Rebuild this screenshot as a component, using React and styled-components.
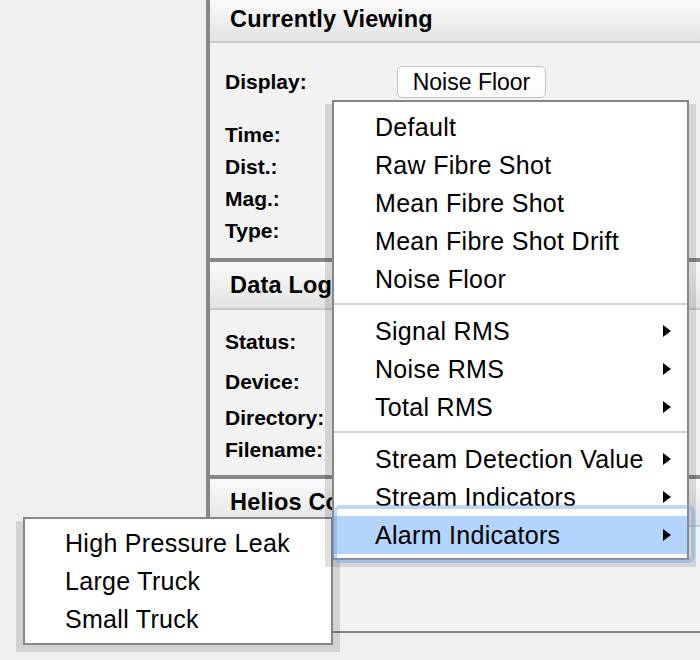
import styled, { createGlobalStyle } from 'styled-components'

const GlobalStyle = createGlobalStyle`
  body {
    margin: 0;
    background: #efefef;
    font-family: "Liberation Sans", Arial, Helvetica, sans-serif;
    color: #000;
  }
`

const Page = styled.div`
  position: relative;
  display: grid;
  grid-template-columns: 206px 1fr;
  width: 700px;
  height: 660px;
  overflow: hidden;
`

const Sidebar = styled.div`
  background: #efefef;
`

const Panel = styled.div`
  align-self: start;
  border-left: 4px solid #878787;
  background: #f2f2f2;
`

const Section = styled.section`
  border-bottom: ${(p) => (p.$last ? 2 : 4)}px solid #878787;
`

const SectionHeader = styled.h2`
  margin: 0;
  height: ${(p) => p.$height}px;
  display: flex;
  align-items: center;
  padding: ${(p) => (p.$cropped ? '0 0 2px 20px' : '0 0 0 20px')};
  box-sizing: border-box;
  background: linear-gradient(#fafafa, #e3e3e3);
  border-bottom: 2px solid #c9c9c9;
  font-size: 23.5px;
  font-weight: bold;
  letter-spacing: 0.2px;
  white-space: nowrap;
  overflow: hidden;
`

const SectionBody = styled.div`
  height: ${(p) => p.$height}px;
  padding: ${(p) => p.$pad}px 0 0 15px;
  box-sizing: border-box;
`

const Row = styled.div`
  display: grid;
  grid-template-columns: 172px auto;
  align-items: center;
  height: ${(p) => p.$height}px;
  margin-bottom: ${(p) => p.$after || 0}px;
`

const Label = styled.span`
  font-size: 21px;
  font-weight: bold;
`

const SelectButton = styled.button`
  justify-self: start;
  width: 149px;
  height: 32px;
  padding: 0;
  border: 1px solid #c4c4c4;
  border-radius: 5px;
  background: linear-gradient(#ffffff, #fbfbfb);
  font-family: inherit;
  font-size: 23px;
  color: #000;
`

const MenuLayer = styled.div`
  position: absolute;
  left: ${(p) => p.$x}px;
  top: ${(p) => p.$y}px;
  width: ${(p) => p.$w}px;
  z-index: ${(p) => p.$z};
`

const MenuShadow = styled.div`
  position: absolute;
  top: 4px;
  left: -7px;
  right: -7px;
  bottom: -7px;
  background: rgba(0, 0, 0, 0.12);
`

const MenuBox = styled.ul`
  position: relative;
  list-style: none;
  margin: 0;
  padding: ${(p) => p.$pad};
  background: #fff;
  border: 2px solid #878787;
`

const MenuItem = styled.li`
  position: relative;
  display: flex;
  align-items: center;
  justify-content: space-between;
  height: 38px;
  padding: 0 16px 0 ${(p) => p.$indent}px;
  font-size: 25px;
  letter-spacing: 0.3px;
  white-space: nowrap;
  background: ${(p) => (p.$active ? '#b3d4fc' : 'transparent')};

  ${(p) =>
    p.$active &&
    `
    &::after {
      content: '';
      position: absolute;
      top: -11px;
      bottom: -9px;
      left: -1px;
      right: -8px;
      border: 4px solid rgba(110, 165, 240, 0.45);
      border-radius: 7px;
      pointer-events: none;
    }
  `}
`

const Arrow = styled.span`
  flex: none;
  width: 0;
  height: 0;
  border-left: 8px solid #000;
  border-top: 6px solid transparent;
  border-bottom: 6px solid transparent;
`

const Separator = styled.li`
  height: 2px;
  margin: 5px 0 7px;
  background: #d2d2d2;
`

const groups = [
  [
    { label: 'Default' },
    { label: 'Raw Fibre Shot' },
    { label: 'Mean Fibre Shot' },
    { label: 'Mean Fibre Shot Drift' },
    { label: 'Noise Floor' },
  ],
  [
    { label: 'Signal RMS', sub: true },
    { label: 'Noise RMS', sub: true },
    { label: 'Total RMS', sub: true },
  ],
  [
    { label: 'Stream Detection Value', sub: true },
    { label: 'Stream Indicators', sub: true },
    { label: 'Alarm Indicators', sub: true, active: true },
  ],
]

const alarms = ['High Pressure Leak', 'Large Truck', 'Small Truck']

const App = () => {
  return (
    <>
      <GlobalStyle />
      <Page>
        <Sidebar />
        <Panel>
          <Section>
            <SectionHeader $height={43} $cropped>
              Currently Viewing
            </SectionHeader>
            <SectionBody $height={215} $pad={19}>
              <Row $height={40} $after={17}>
                <Label>Display:</Label>
                <SelectButton>Noise Floor</SelectButton>
              </Row>
              <Row $height={32}>
                <Label>Time:</Label>
              </Row>
              <Row $height={32}>
                <Label>Dist.:</Label>
              </Row>
              <Row $height={32}>
                <Label>Mag.:</Label>
              </Row>
              <Row $height={32}>
                <Label>Type:</Label>
              </Row>
            </SectionBody>
          </Section>

          <Section>
            <SectionHeader $height={48}>Data Logger</SectionHeader>
            <SectionBody $height={165} $pad={12}>
              <Row $height={40}>
                <Label>Status:</Label>
              </Row>
              <Row $height={40}>
                <Label>Device:</Label>
              </Row>
              <Row $height={32}>
                <Label>Directory:</Label>
              </Row>
              <Row $height={32}>
                <Label>Filename:</Label>
              </Row>
            </SectionBody>
          </Section>

          <Section $last>
            <SectionHeader $height={48}>Helios Control</SectionHeader>
            <SectionBody $height={104} $pad={0} />
          </Section>
        </Panel>

        <MenuLayer $x={23} $y={517} $w={310} $z={2}>
          <MenuShadow />
          <MenuBox $pad="5px 0">
            {alarms.map((a) => (
              <MenuItem key={a} $indent={40}>
                {a}
              </MenuItem>
            ))}
          </MenuBox>
        </MenuLayer>

        <MenuLayer $x={332} $y={100} $w={357} $z={3}>
          <MenuShadow />
          <MenuBox $pad="6px 0 4px">
            {groups.map((group, gi) => [
              gi > 0 && <Separator key={`sep-${gi}`} />,
              ...group.map((item) => (
                <MenuItem key={item.label} $indent={41} $active={item.active}>
                  {item.label}
                  {item.sub && <Arrow />}
                </MenuItem>
              )),
            ])}
          </MenuBox>
        </MenuLayer>
      </Page>
    </>
  )
}

export default App
